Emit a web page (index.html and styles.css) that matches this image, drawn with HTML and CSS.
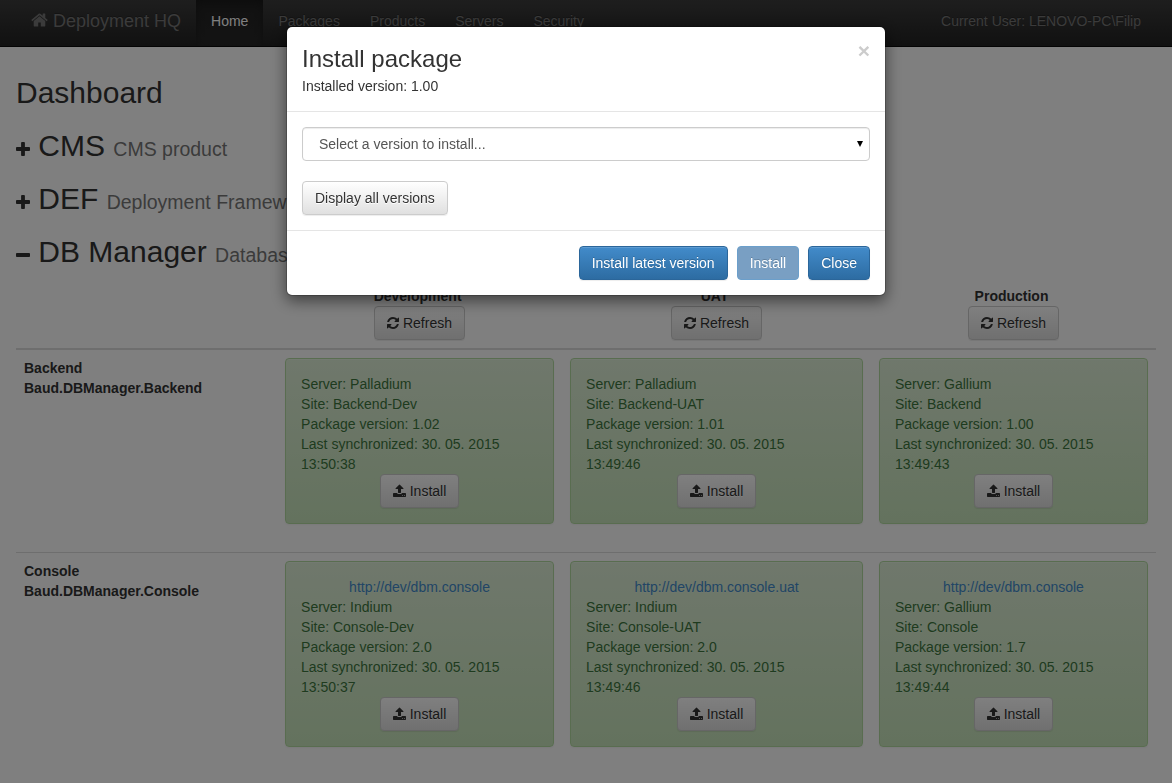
FILE: index.html
```html
<!DOCTYPE html>
<html lang="en">
<head>
<meta charset="utf-8">
<meta name="viewport" content="width=device-width, initial-scale=1">
<title>Deployment HQ</title>
<link rel="stylesheet" href="styles.css">
</head>
<body>
<svg class="sprite" aria-hidden="true">
  <symbol id="home" viewBox="64 0 1664 1792"><path d="M1472 992v480q0 26-19 45t-45 19h-384v-384h-256v384h-384q-26 0-45-19t-19-45v-480q0-1 .5-3t.5-3l575-474 575 474q1 2 1 6zm223-69l-62 74q-8 9-21 11h-3q-13 0-21-7l-692-577-692 577q-12 8-24 7-13-2-21-11l-62-74q-8-10-7-23.5t11-21.5l719-599q32-26 76-26t76 26l244 204v-195q0-14 9-23t23-9h192q14 0 23 9t9 23v408l219 182q10 8 11 21.5t-7 23.5z"/></symbol>
  <symbol id="refresh" viewBox="128 0 1536 1792"><path d="M1639 1056q0 5-1 7-64 268-268 434.5t-478 166.5q-146 0-282.5-55t-243.5-157l-129 129q-19 19-45 19t-45-19-19-45v-448q0-26 19-45t45-19h448q26 0 45 19t19 45-19 45l-137 137q71 66 161 102t187 36q134 0 250-65t186-179q11-17 53-117 8-23 30-23h192q13 0 22.5 9.5t9.5 22.5zm25-800v448q0 26-19 45t-45 19h-448q-26 0-45-19t-19-45 19-45l138-138q-148-137-349-137-134 0-250 65t-186 179q-11 17-53 117-8 23-30 23h-199q-13 0-22.5-9.5t-9.5-22.5v-7q65-268 270-434.5t480-166.5q146 0 284 55.5t245 156.5l130-129q19-19 45-19t45 19 19 45z"/></symbol>
  <symbol id="upload" viewBox="64 0 1664 1792"><path d="M1344 1472q0-26-19-45t-45-19-45 19-19 45 19 45 45 19 45-19 19-45zm256 0q0-26-19-45t-45-19-45 19-19 45 19 45 45 19 45-19 19-45zm128-224v320q0 40-28 68t-68 28h-1472q-40 0-68-28t-28-68v-320q0-40 28-68t68-28h427q21 56 70.5 92t110.5 36h256q61 0 110.5-36t70.5-92h427q40 0 68 28t28 68zm-325-648q-17 40-59 40h-256v448q0 26-19 45t-45 19h-256q-26 0-45-19t-19-45v-448h-256q-42 0-59-40-17-39 14-69l448-448q18-19 45-19t45 19l448 448q31 30 14 69z"/></symbol>
  <symbol id="plus" viewBox="192 128 1408 1408"><path d="M1600 736v192q0 40-28 68t-68 28h-416v416q0 40-28 68t-68 28h-192q-40 0-68-28t-28-68v-416h-416q-40 0-68-28t-28-68v-192q0-40 28-68t68-28h416v-416q0-40 28-68t68-28h192q40 0 68 28t28 68v416h416q40 0 68 28t28 68z"/></symbol>
  <symbol id="minus" viewBox="192 128 1408 1408"><path d="M1600 736v192q0 40-28 68t-68 28h-1216q-40 0-68-28t-28-68v-192q0-40 28-68t68-28h1216q40 0 68 28t28 68z"/></symbol>
</svg>

<nav class="navbar">
  <a class="brand" href="#"><svg class="icon icon-home"><use href="#home"/></svg> Deployment HQ</a>
  <a class="nav-link active" href="#">Home</a>
  <a class="nav-link" href="#">Packages</a>
  <a class="nav-link" href="#">Products</a>
  <a class="nav-link" href="#">Servers</a>
  <a class="nav-link" href="#">Security</a>
  <span class="user">Current User: LENOVO-PC\Filip</span>
</nav>

<main class="page">
  <h2 class="heading">Dashboard</h2>
  <h2 class="heading"><button class="toggle" type="button" aria-label="Expand CMS"><svg class="icon icon-toggle"><use href="#plus"/></svg></button> CMS <small class="note">CMS product</small></h2>
  <h2 class="heading"><button class="toggle" type="button" aria-label="Expand DEF"><svg class="icon icon-toggle"><use href="#plus"/></svg></button> DEF <small class="note">Deployment Framework</small></h2>
  <h2 class="heading"><button class="toggle" type="button" aria-label="Collapse DB Manager"><svg class="icon icon-toggle"><use href="#minus"/></svg></button> DB Manager <small class="note">Database Manager</small></h2>

  <table class="deployments">
    <colgroup><col class="col-name"><col class="col-dev"><col class="col-uat"><col class="col-prod"></colgroup>
    <thead>
      <tr>
        <td></td>
        <th scope="col">Development&nbsp;<br><button class="btn" type="button"><svg class="icon icon-refresh"><use href="#refresh"/></svg> Refresh</button></th>
        <th scope="col">UAT&nbsp;<br><button class="btn" type="button"><svg class="icon icon-refresh"><use href="#refresh"/></svg> Refresh</button></th>
        <th scope="col">Production&nbsp;<br><button class="btn" type="button"><svg class="icon icon-refresh"><use href="#refresh"/></svg> Refresh</button></th>
      </tr>
    </thead>
    <tbody>
      <tr>
        <th scope="row">Backend<br>Baud.DBManager.Backend</th>
        <td><div class="card">Server: Palladium<br>Site: Backend-Dev<br>Package version: 1.02<br>Last synchronized: 30. 05. 2015<br>13:50:38<div class="center"><button class="btn" type="button"><svg class="icon icon-upload"><use href="#upload"/></svg> Install</button></div></div></td>
        <td><div class="card">Server: Palladium<br>Site: Backend-UAT<br>Package version: 1.01<br>Last synchronized: 30. 05. 2015<br>13:49:46<div class="center"><button class="btn" type="button"><svg class="icon icon-upload"><use href="#upload"/></svg> Install</button></div></div></td>
        <td><div class="card">Server: Gallium<br>Site: Backend<br>Package version: 1.00<br>Last synchronized: 30. 05. 2015<br>13:49:43<div class="center"><button class="btn" type="button"><svg class="icon icon-upload"><use href="#upload"/></svg> Install</button></div></div></td>
      </tr>
      <tr>
        <th scope="row">Console<br>Baud.DBManager.Console</th>
        <td><div class="card"><div class="center"><a class="link" href="#">http://dev/dbm.console</a></div>Server: Indium<br>Site: Console-Dev<br>Package version: 2.0<br>Last synchronized: 30. 05. 2015<br>13:50:37<div class="center"><button class="btn" type="button"><svg class="icon icon-upload"><use href="#upload"/></svg> Install</button></div></div></td>
        <td><div class="card"><div class="center"><a class="link" href="#">http://dev/dbm.console.uat</a></div>Server: Indium<br>Site: Console-UAT<br>Package version: 2.0<br>Last synchronized: 30. 05. 2015<br>13:49:46<div class="center"><button class="btn" type="button"><svg class="icon icon-upload"><use href="#upload"/></svg> Install</button></div></div></td>
        <td><div class="card"><div class="center"><a class="link" href="#">http://dev/dbm.console</a></div>Server: Gallium<br>Site: Console<br>Package version: 1.7<br>Last synchronized: 30. 05. 2015<br>13:49:44<div class="center"><button class="btn" type="button"><svg class="icon icon-upload"><use href="#upload"/></svg> Install</button></div></div></td>
      </tr>
    </tbody>
  </table>
</main>

<div class="backdrop">
  <div class="modal" role="dialog" aria-modal="true" aria-labelledby="modal-title">
    <header class="modal-header">
      <div>
        <h3 class="modal-title" id="modal-title">Install package</h3>
        <div class="modal-note">Installed version: 1.00</div>
      </div>
      <button class="close" type="button" aria-label="Close dialog">×</button>
    </header>
    <div class="modal-body">
      <div class="select-wrap">
        <select class="select" aria-label="Version to install"><option>Select a version to install...</option></select>
      </div>
      <button class="btn" type="button">Display all versions</button>
    </div>
    <footer class="modal-footer">
      <button class="btn btn-primary" type="button">Install latest version</button>
      <button class="btn btn-primary" type="button" disabled>Install</button>
      <button class="btn btn-primary" type="button">Close</button>
    </footer>
  </div>
</div>
</body>
</html>
```
FILE: styles.css
```css
* { box-sizing: border-box; }

body {
  margin: 0;
  background: #fff;
  color: #333;
  font-family: "Liberation Sans", Arial, sans-serif;
  font-size: 14px;
  line-height: 20px;
}

button, select { font: inherit; }

.sprite { display: none; }
.icon { fill: currentColor; vertical-align: -2px; }
.icon-home { width: 17px; height: 18px; }
.icon-refresh { width: 12px; height: 14px; }
.icon-upload { width: 13px; height: 14px; }
.icon-toggle { width: 14px; height: 14px; vertical-align: baseline; }

.navbar {
  display: flex;
  padding: 0 16px;
  background: linear-gradient(#3c3c3c, #222);
  border-bottom: 1px solid #080808;
  color: #777;
  text-shadow: 0 -1px 0 rgba(0, 0, 0, .25);
}
.brand, .nav-link, .user {
  padding: 11px 15px 15px;
  color: inherit;
  text-decoration: none;
  white-space: nowrap;
}
.brand { font-size: 18px; }
.nav-link.active {
  color: #fff;
  background: linear-gradient(#222, #282828);
  box-shadow: inset 0 3px 9px rgba(0, 0, 0, .25);
}
.user { margin-left: auto; }

.page { padding: 9px 16px 0; }

.heading {
  margin: 20px 0 10px;
  font-size: 30px;
  font-weight: 400;
  line-height: 33px;
}
.note { font-size: 65%; line-height: 20px; color: #777; }
.toggle { padding: 0; border: 0; background: none; color: inherit; line-height: 20px; }

.deployments {
  width: 100%;
  table-layout: fixed;
  border-spacing: 0;
}
.col-name { width: 22.9%; }
.col-dev, .col-prod { width: 25%; }
.col-uat { width: 27.1%; }
.deployments th, .deployments td { padding: 8px; vertical-align: top; }
.deployments thead th, .deployments thead td { border-bottom: 2px solid #ddd; text-align: center; }
.deployments tbody th { text-align: left; }
.deployments tbody tr + tr > * { border-top: 1px solid #ddd; }

.card {
  margin-bottom: 20px;
  padding: 15px;
  border: 1px solid #b2dba1;
  border-radius: 4px;
  background: linear-gradient(#dff0d8, #c8e5bc);
  box-shadow: inset 0 1px 0 rgba(255, 255, 255, .25), 0 1px 2px rgba(0, 0, 0, .05);
  color: #3c763d;
  text-shadow: 0 1px 0 rgba(255, 255, 255, .2);
}
tbody tr:last-child .card { margin-bottom: 0; }
.center { text-align: center; }
.link { color: #428bca; text-decoration: none; }

.btn {
  padding: 6px 12px;
  border: 1px solid #ccc;
  border-radius: 4px;
  background: linear-gradient(#fff, #e0e0e0);
  box-shadow: inset 0 1px 0 rgba(255, 255, 255, .15), 0 1px 1px rgba(0, 0, 0, .075);
  color: #333;
  font-weight: 400;
  text-shadow: 0 1px 0 #fff;
  vertical-align: top;
  white-space: nowrap;
}
.btn-primary {
  border-color: #2b669a;
  background: linear-gradient(#428bca, #2d6ca2);
  color: #fff;
  text-shadow: 0 -1px 0 rgba(0, 0, 0, .2);
}
.btn-primary:disabled {
  border-color: #6b9fcb;
  background: #799fc3;
  box-shadow: none;
}

.backdrop {
  position: fixed;
  inset: 0;
  padding: 26px 16px;
  overflow: auto;
  background: rgba(0, 0, 0, .5);
}
.modal {
  max-width: 600px;
  margin: 0 auto;
  border: 1px solid rgba(0, 0, 0, .2);
  border-radius: 6px;
  background: #fff;
  background-clip: padding-box;
  box-shadow: 0 5px 15px rgba(0, 0, 0, .5);
}
.modal-header {
  display: flex;
  align-items: flex-start;
  justify-content: space-between;
  padding: 15px;
  border-bottom: 1px solid #e5e5e5;
}
.modal-title { margin: 0; font-size: 24px; font-weight: 400; line-height: 34px; }
.close {
  margin-top: -2px;
  padding: 0;
  border: 0;
  background: none;
  color: #ccc;
  font-size: 21px;
  font-weight: 700;
  line-height: 21px;
}
.modal-body { padding: 15px; }
.select-wrap { position: relative; margin-bottom: 20px; }
.select-wrap::after {
  content: "";
  position: absolute;
  top: 14px;
  right: 7px;
  width: 6px;
  height: 6px;
  background: #000;
  clip-path: polygon(0 0, 100% 0, 50% 100%);
  pointer-events: none;
}
.select {
  display: block;
  width: 100%;
  height: 34px;
  padding: 6px 16px;
  appearance: none;
  border: 1px solid #ccc;
  border-radius: 4px;
  background: #fff;
  box-shadow: inset 0 1px 1px rgba(0, 0, 0, .075);
  color: #555;
}
.modal-footer {
  display: flex;
  justify-content: flex-end;
  gap: 9px;
  padding: 15px;
  border-top: 1px solid #e5e5e5;
}
```
